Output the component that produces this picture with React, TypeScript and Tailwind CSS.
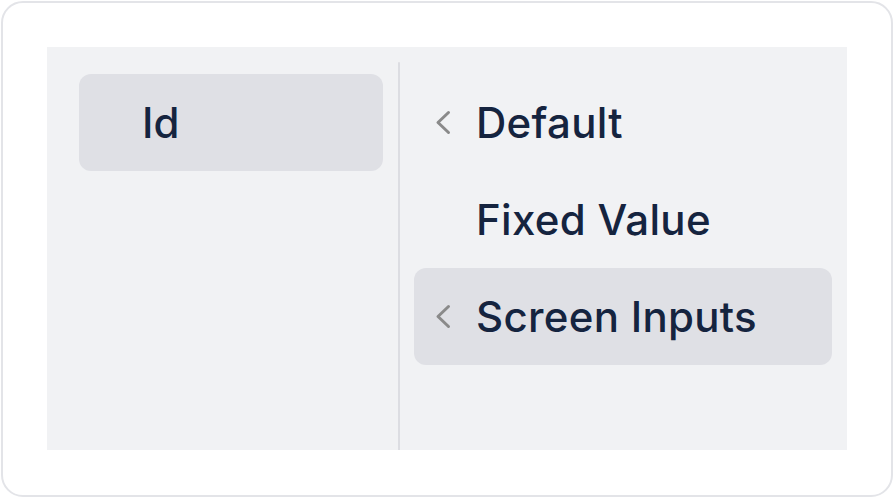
type Option = {
  label: string;
  hasChildren: boolean;
  active?: boolean;
};

const fields = [{ label: "Id", active: true }];

const options: Option[] = [
  { label: "Default", hasChildren: true },
  { label: "Fixed Value", hasChildren: false },
  { label: "Screen Inputs", hasChildren: true, active: true },
];

function Chevron() {
  return (
    <svg width="16" height="25" viewBox="0 0 16 25" fill="none">
      <polyline
        points="13.5,2.5 3,12.5 13.5,22.5"
        stroke="#8a8a8a"
        strokeWidth="3"
        strokeLinecap="round"
        strokeLinejoin="round"
      />
    </svg>
  );
}

function OptionRow({ option }: { option: Option }) {
  return (
    <div
      className={`flex h-[97px] items-center rounded-[12px] pl-[21px] ${
        option.active ? "bg-[#dfe0e5]" : ""
      }`}
    >
      <span className="flex w-[16px] items-center justify-center">
        {option.hasChildren && <Chevron />}
      </span>
      <span className="ml-[25px] tracking-[0.3px]">{option.label}</span>
    </div>
  );
}

export default function App() {
  return (
    <div className="h-[498px] w-[894px] bg-white p-px">
      <div
        className="h-full w-full rounded-[22px] border-2 border-[#e3e4e8] bg-white p-[44px]"
        style={{ fontFamily: "Inter, 'Noto Sans', sans-serif" }}
      >
        <div className="flex h-[403px] w-[800px] bg-[#f1f2f4] text-[42px] font-medium leading-none text-[#15243f]">
          <div className="w-[351px] pl-[32px] pr-[15px] pt-[27px]">
            {fields.map((field) => (
              <div
                key={field.label}
                className={`flex h-[97px] items-center rounded-[12px] pl-[63px] ${
                  field.active ? "bg-[#dfe0e5]" : ""
                }`}
              >
                {field.label}
              </div>
            ))}
          </div>
          <div className="mt-[15px] w-[2px] rounded-t-full bg-[#dcdde2]" />
          <div className="flex-1 pl-[14px] pr-[15px] pt-[27px]">
            {options.map((option) => (
              <OptionRow key={option.label} option={option} />
            ))}
          </div>
        </div>
      </div>
    </div>
  );
}
